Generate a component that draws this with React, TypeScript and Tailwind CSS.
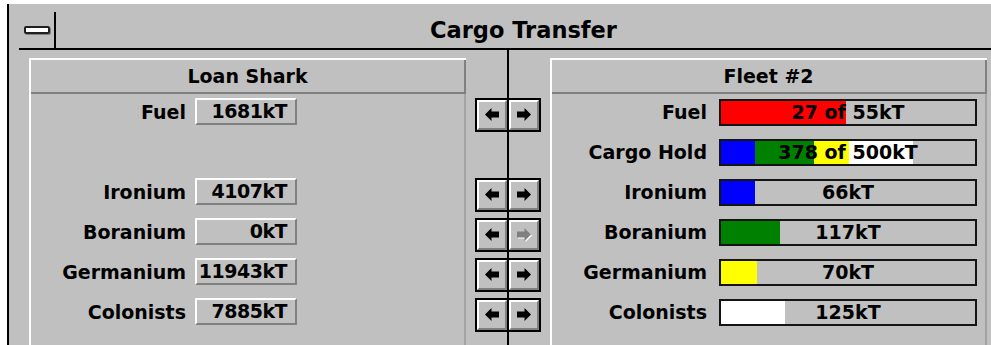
const CAP = 500;
const INNER = 254;

type Seg = { color: string; value: number };

const leftRows: ({ label: string; value: string } | null)[] = [
  { label: 'Fuel', value: '1681kT' },
  null,
  { label: 'Ironium', value: '4107kT' },
  { label: 'Boranium', value: '0kT' },
  { label: 'Germanium', value: '11943kT' },
  { label: 'Colonists', value: '7885kT' },
];

const rightRows: { label: string; text: string; segs: Seg[]; scale: number }[] = [
  { label: 'Fuel', text: '27 of 55kT', segs: [{ color: '#ff0000', value: 27 }], scale: 55 },
  {
    label: 'Cargo Hold',
    text: '378 of 500kT',
    segs: [
      { color: '#0000ff', value: 66 },
      { color: '#008000', value: 117 },
      { color: '#ffff00', value: 70 },
      { color: '#ffffff', value: 125 },
    ],
    scale: CAP,
  },
  { label: 'Ironium', text: '66kT', segs: [{ color: '#0000ff', value: 66 }], scale: CAP },
  { label: 'Boranium', text: '117kT', segs: [{ color: '#008000', value: 117 }], scale: CAP },
  { label: 'Germanium', text: '70kT', segs: [{ color: '#ffff00', value: 70 }], scale: CAP },
  { label: 'Colonists', text: '125kT', segs: [{ color: '#ffffff', value: 125 }], scale: CAP },
];

// null = no buttons on that row, 'off' = right arrow greyed out
const arrowRows: (null | 'on' | 'off')[] = ['on', null, 'on', 'off', 'on', 'on'];

function Arrow({ dir, disabled }: { dir: 'left' | 'right'; disabled?: boolean }) {
  const pts =
    dir === 'left'
      ? '0,6.5 6.5,0 6.5,3.5 14,3.5 14,9.5 6.5,9.5 6.5,13'
      : '14,6.5 7.5,0 7.5,3.5 0,3.5 0,9.5 7.5,9.5 7.5,13';
  return (
    <svg width="15" height="14" viewBox="0 0 15 14">
      {disabled && <polygon points={pts} fill="#ffffff" transform="translate(1 1)" />}
      <polygon points={pts} fill={disabled ? '#808080' : '#000000'} />
    </svg>
  );
}

function Face({ children }: { children: React.ReactNode }) {
  return (
    <div className="flex-1 h-full flex items-center justify-center border-t-2 border-l-2 border-white border-b-2 border-r-2 border-b-[#808080] border-r-[#808080] bg-[#c0c0c0]">
      {children}
    </div>
  );
}

function Panel({ title, children }: { title: string; children: React.ReactNode }) {
  return (
    <div className="w-[437px] mt-[8px] flex flex-col border-l-2 border-t-2 border-white">
      <div className="h-[34px] flex items-center justify-center border-r-2 border-b-2 border-[#808080] text-[19px] font-bold text-black">
        {title}
      </div>
      <div className="flex-1 border-r-2 border-[#a4a4a4] pt-[5px] flex flex-col gap-[13px]">
        {children}
      </div>
    </div>
  );
}

export default function App() {
  return (
    <div className="w-[991px] h-[345px] bg-white pt-[4px] pl-[7px] overflow-hidden font-['DejaVu_Sans',sans-serif]">
      <div className="h-full bg-[#c0c0c0] border-l-2 border-black flex flex-col">
        {/* title bar */}
        <div className="mt-[8px] ml-[10px] h-[38px] flex border-b-2 border-black">
          <div className="w-[37px] border-r-2 border-black flex items-center justify-center">
            <div className="w-[26px] h-[8px] rounded-[2px] border-2 border-[#202020] bg-white shadow-[1px_1px_0_#808080]" />
          </div>
          <div className="flex-1 flex items-center justify-center text-[22.5px] font-bold text-black leading-none">
            Cargo Transfer
          </div>
        </div>

        <div className="flex-1 flex pl-[20px]">
          <Panel title="Loan Shark">
            {leftRows.map((row, i) => (
              <div key={i} className="h-[27px] flex items-center">
                {row && (
                  <>
                    <div className="w-[155px] text-right text-[19px] font-bold text-black">{row.label}</div>
                    <div className="ml-[9px] -mt-[3px] w-[102px] h-[27px] flex items-center justify-end pr-[8px] border-t-2 border-l-2 border-white border-b-2 border-r-2 border-b-[#808080] border-r-[#808080] text-[19px] font-bold text-black tracking-[-0.5px]">
                      {row.value}
                    </div>
                  </>
                )}
              </div>
            ))}
          </Panel>

          {/* transfer buttons */}
          <div className="w-[84px] flex">
            <div className="w-[43px] border-r-2 border-black flex flex-col items-end pt-[48px] gap-[6px]">
              {arrowRows.map((a, i) => (
                <div key={i} className="h-[34px] w-[32px] flex">
                  {a && (
                    <div className="w-full h-full flex border-l-2 border-t-2 border-b-2 border-black">
                      <Face>
                        <Arrow dir="left" />
                      </Face>
                    </div>
                  )}
                </div>
              ))}
            </div>
            <div className="w-[41px] flex flex-col items-start pt-[48px] gap-[6px]">
              {arrowRows.map((a, i) => (
                <div key={i} className="h-[34px] w-[32px] flex">
                  {a && (
                    <div className="w-full h-full flex border-r-2 border-t-2 border-b-2 border-black">
                      <Face>
                        <Arrow dir="right" disabled={a === 'off'} />
                      </Face>
                    </div>
                  )}
                </div>
              ))}
            </div>
          </div>

          <Panel title="Fleet #2">
            {rightRows.map((row) => (
              <div key={row.label} className="h-[27px] flex items-center">
                <div className="w-[155px] text-right text-[19px] font-bold text-black">{row.label}</div>
                <div className="ml-[12px] relative w-[258px] h-[27px] border-2 border-[#141414] bg-[#c0c0c0] flex">
                  {row.segs.map((s, j) => (
                    <div
                      key={j}
                      className="h-full"
                      style={{ width: (s.value / row.scale) * INNER, backgroundColor: s.color }}
                    />
                  ))}
                  <div className="absolute inset-0 flex items-center justify-center text-[19px] font-bold text-black leading-none">
                    {row.text}
                  </div>
                </div>
              </div>
            ))}
          </Panel>
        </div>
      </div>
    </div>
  );
}
